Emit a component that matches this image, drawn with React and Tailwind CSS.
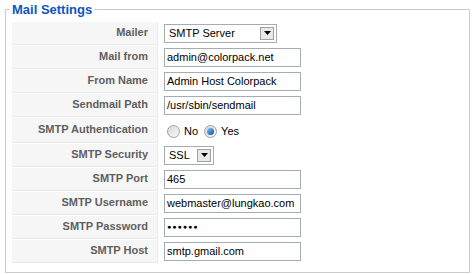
const rows = [
  { label: 'Mailer', type: 'select', value: 'SMTP Server', width: 'w-[113px]' },
  { label: 'Mail from', type: 'text', value: 'admin@colorpack.net' },
  { label: 'From Name', type: 'text', value: 'Admin Host Colorpack' },
  { label: 'Sendmail Path', type: 'text', value: '/usr/sbin/sendmail' },
  { label: 'SMTP Authentication', type: 'radio' },
  { label: 'SMTP Security', type: 'select', value: 'SSL', width: 'w-[50px]' },
  { label: 'SMTP Port', type: 'text', value: '465' },
  { label: 'SMTP Username', type: 'text', value: 'webmaster@lungkao.com' },
  { label: 'SMTP Password', type: 'password', value: '\u25cf\u25cf\u25cf\u25cf\u25cf\u25cf' },
  { label: 'SMTP Host', type: 'text', value: 'smtp.gmail.com' },
];

function Radio({ checked }) {
  return (
    <span className="inline-flex h-[13px] w-[13px] items-center justify-center rounded-full border border-[#a0a0a0] bg-gradient-to-br from-[#d8d8d8] to-[#f8f8f8]">
      {checked && <span className="h-[7px] w-[7px] rounded-full bg-gradient-to-br from-[#7fc3ff] to-[#0a4f9a]" />}
    </span>
  );
}

function Field({ row }) {
  if (row.type === 'select') {
    return (
      <div className={`flex h-[19px] items-center justify-between border border-[#a5acb2] bg-white pl-[4px] pr-[2px] ${row.width}`}>
        <span>{row.value}</span>
        <span className="flex h-[13px] w-[14px] items-center justify-center border border-[#a0a0a0] bg-[#e8e8e8]">
          <svg width="7" height="4" viewBox="0 0 7 4"><path d="M0 0h7L3.5 4z" fill="#000" /></svg>
        </span>
      </div>
    );
  }
  if (row.type === 'radio') {
    return (
      <div className="flex items-center pl-[3px] pt-[3px]">
        <Radio />
        <span className="ml-[4px] mr-[6px]">No</span>
        <Radio checked />
        <span className="ml-[4px]">Yes</span>
      </div>
    );
  }
  return (
    <div className="flex h-[19px] w-[137px] items-center border border-[#a5acb2] bg-white pl-[2px]">
      {row.type === 'password' ? (
        <span className="text-[7px] tracking-[1px]">{row.value}</span>
      ) : (
        row.value
      )}
    </div>
  );
}

export default function App() {
  return (
    <div className="h-[274px] w-[475px] bg-white px-[5px] font-['Liberation_Sans',Arial,sans-serif] text-[11px] text-black">
      <fieldset className="border border-[#cccccc] px-[6px] pb-[9px]">
        <legend className="-ml-[2px] px-[2px] text-[13px] font-bold text-[#0b55c4]">Mail Settings</legend>
        <div className="flex flex-col gap-px pt-[2px]">
          {rows.map((row) => (
            <div key={row.label} className={`flex ${row.type === 'radio' ? 'h-[25px]' : 'h-[23px]'}`}>
              <div className="flex w-[146px] items-center justify-end border-r border-b border-[#e9e9e9] bg-[#f6f6f6] pr-[9px] text-[11px] font-bold text-[#5f5f5f]">
                {row.label}
              </div>
              <div className="flex items-center pl-[6px]">
                <Field row={row} />
              </div>
            </div>
          ))}
        </div>
      </fieldset>
    </div>
  );
}
